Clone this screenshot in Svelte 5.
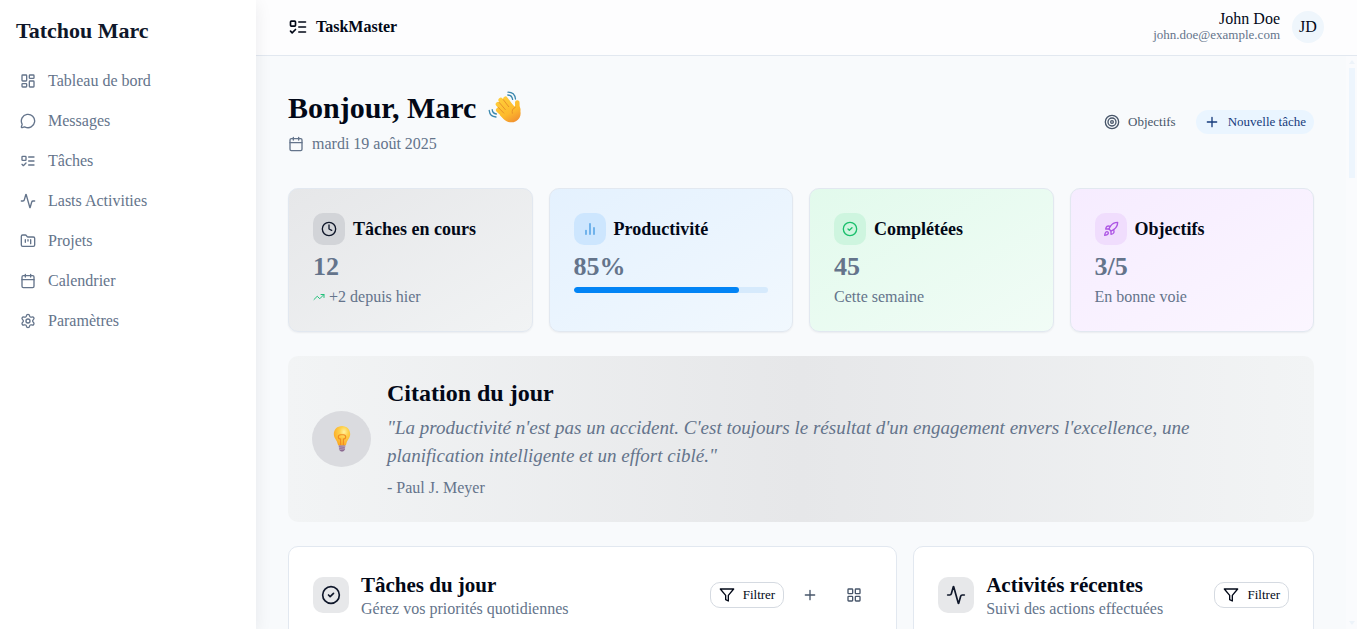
<script>
  const icons = {
    dashboard: '<rect width="7" height="9" x="3" y="3" rx="1"/><rect width="7" height="5" x="14" y="3" rx="1"/><rect width="7" height="9" x="14" y="12" rx="1"/><rect width="7" height="5" x="3" y="16" rx="1"/>',
    message: '<path d="M2.992 16.342a2 2 0 0 1 .094 1.167l-1.065 3.29a1 1 0 0 0 1.236 1.168l3.413-.998a2 2 0 0 1 1.099.092 10 10 0 1 0-4.777-4.719"/>',
    todo: '<rect x="3" y="5" width="6" height="6" rx="1"/><path d="m3 17 2 2 4-4"/><path d="M13 6h8M13 12h8M13 18h8"/>',
    activity: '<path d="M22 12h-2.48a2 2 0 0 0-1.93 1.46l-2.35 8.36a.25.25 0 0 1-.48 0L9.24 2.18a.25.25 0 0 0-.48 0l-2.35 8.36A2 2 0 0 1 4.49 12H2"/>',
    folder: '<path d="M4 20h16a2 2 0 0 0 2-2V8a2 2 0 0 0-2-2h-7.93a2 2 0 0 1-1.66-.9l-.82-1.2A2 2 0 0 0 7.93 3H4a2 2 0 0 0-2 2v13c0 1.1.9 2 2 2Z"/><path d="M8 10v4M12 10v2M16 10v6"/>',
    calendar: '<path d="M8 2v4M16 2v4"/><rect width="18" height="18" x="3" y="4" rx="2"/><path d="M3 10h18"/>',
    settings: '<path d="M9.671 4.136a2.34 2.34 0 0 1 4.659 0 2.34 2.34 0 0 0 3.319 1.915 2.34 2.34 0 0 1 2.33 4.033 2.34 2.34 0 0 0 0 3.831 2.34 2.34 0 0 1-2.33 4.033 2.34 2.34 0 0 0-3.319 1.915 2.34 2.34 0 0 1-4.659 0 2.34 2.34 0 0 0-3.32-1.915 2.34 2.34 0 0 1-2.33-4.033 2.34 2.34 0 0 0 0-3.831A2.34 2.34 0 0 1 6.35 6.051a2.34 2.34 0 0 0 3.319-1.915"/><circle cx="12" cy="12" r="3"/>',
    clock: '<circle cx="12" cy="12" r="10"/><path d="M12 6v6l4 2"/>',
    chart: '<path d="M18 20V10M12 20V4M6 20v-6"/>',
    check: '<circle cx="12" cy="12" r="10"/><path d="m9 12 2 2 4-4"/>',
    rocket: '<path d="M4.5 16.5c-1.5 1.26-2 5-2 5s3.74-.5 5-2c.71-.84.7-2.13-.09-2.91a2.18 2.18 0 0 0-2.91-.09z"/><path d="m12 15-3-3a22 22 0 0 1 2-3.95A12.88 12.88 0 0 1 22 2c0 2.72-.78 7.5-6 11a22.35 22.35 0 0 1-4 2z"/><path d="M9 12H4s.55-3.03 2-4c1.62-1.08 5 0 5 0"/><path d="M12 15v5s3.03-.55 4-2c1.08-1.62 0-5 0-5"/>',
    trend: '<path d="M22 7 13.5 15.5 8.5 10.5 2 17"/><path d="M16 7h6v6"/>',
    target: '<circle cx="12" cy="12" r="10"/><circle cx="12" cy="12" r="6"/><circle cx="12" cy="12" r="2"/>',
    plus: '<path d="M5 12h14M12 5v14"/>',
    filter: '<path d="M22 3H2l8 9.46V19l4 2v-8.54Z"/>',
    grid: '<rect width="7" height="7" x="3" y="3" rx="1"/><rect width="7" height="7" x="14" y="3" rx="1"/><rect width="7" height="7" x="14" y="14" rx="1"/><rect width="7" height="7" x="3" y="14" rx="1"/>'
  };

  const links = [
    ['dashboard', 'Tableau de bord'],
    ['message', 'Messages'],
    ['todo', 'Tâches'],
    ['activity', 'Lasts Activities'],
    ['folder', 'Projets'],
    ['calendar', 'Calendrier'],
    ['settings', 'Paramètres']
  ];

  const stats = [
    { tone: 'gray', icon: 'clock', title: 'Tâches en cours', value: '12', note: '+2 depuis hier', trend: true },
    { tone: 'blue', icon: 'chart', title: 'Productivité', value: '85%', progress: 85 },
    { tone: 'green', icon: 'check', title: 'Complétées', value: '45', note: 'Cette semaine' },
    { tone: 'purple', icon: 'rocket', title: 'Objectifs', value: '3/5', note: 'En bonne voie' }
  ];
</script>

{#snippet icon(name, size = 16)}
  <svg class="icon" width={size} height={size} viewBox="0 0 24 24" aria-hidden="true">{@html icons[name]}</svg>
{/snippet}

<div class="app">
  <aside class="sidebar">
    <h2>Tatchou Marc</h2>
    <nav>
      {#each links as [name, label]}
        <a href="#{name}">{@render icon(name)}<span>{label}</span></a>
      {/each}
    </nav>
  </aside>

  <div class="shell">
    <header class="topbar">
      <div class="brand">{@render icon('todo', 20)}<span>TaskMaster</span></div>
      <div class="account">
        <div class="who">
          <span>John Doe</span>
          <small>john.doe@example.com</small>
        </div>
        <div class="avatar">JD</div>
      </div>
    </header>

    <div class="viewport">
      <main>
        <section class="hero">
          <div>
            <h1>
              <span>Bonjour, Marc</span>
              <svg width="34" height="34" viewBox="0 0 34 34" aria-hidden="true">
                <defs>
                  <linearGradient id="skin" gradientUnits="userSpaceOnUse" x1="10" y1="5" x2="26" y2="32">
                    <stop offset="0" stop-color="#ffd03c" />
                    <stop offset="0.65" stop-color="#fdba2c" />
                    <stop offset="1" stop-color="#f18f30" />
                  </linearGradient>
                </defs>
                <g stroke="url(#skin)" stroke-width="4.600" stroke-linecap="round" fill="none">
                  <path d="m17.500 7.800 6 8M12.700 9l7 9M10 13.300l7 8M10.200 19l6.500 6" />
                  <path d="M29.300 11.500c-.3 3-.2 4.500 1 7" />
                </g>
                <path d="M14 17.500 21.500 11l5 4.500 2.800-2 2.600 4.500c1.800 5.500.2 10-4 12.200-4.300 2.200-8.900 1.200-12.400-2.300l-3.500-3.600Z" fill="url(#skin)" />
                <path d="m15.300 8.700 5.400 7M11.200 11.400l6.100 7.200M10.400 16.500l5.300 5.500M27.300 16.300c-2.700 1.300-3.700 3.300-3 6" fill="none" stroke="#e58b28" stroke-width=".9" stroke-linecap="round" />
                <path d="M20 1.200c4.200 0 7 2.700 7.500 6.800M19.800 4c2.700.1 4.400 1.800 4.800 4.400M1.200 19.400c.4 3.800 2.800 6.400 6.800 6.600M4.200 18.600c.2 2.400 1.700 4 4.200 4.400" fill="none" stroke="#3b88ae" stroke-width="1.300" stroke-linecap="round" />
              </svg>
            </h1>
            <p class="date">{@render icon('calendar')}<span>mardi 19 août 2025</span></p>
          </div>
          <div class="actions">
            <button class="plain">{@render icon('target')}Objectifs</button>
            <button class="primary">{@render icon('plus')}Nouvelle tâche</button>
          </div>
        </section>

        <section class="stats">
          {#each stats as s}
            <article class="stat {s.tone}">
              <div class="stat-head">
                <span class="tile">{@render icon(s.icon)}</span>
                <h3>{s.title}</h3>
              </div>
              <strong>{s.value}</strong>
              {#if s.progress}
                <div class="track"><div class="fill" style="width: {s.progress}%"></div></div>
              {:else}
                <p>{#if s.trend}{@render icon('trend', 12)}{/if}{s.note}</p>
              {/if}
            </article>
          {/each}
        </section>

        <section class="quote">
          <div class="bulb">
            <svg width="28" height="28" viewBox="0 0 28 28" aria-hidden="true">
              <defs>
                <radialGradient id="glow" cx="0.62" cy="0.3" r="0.75">
                  <stop offset="0" stop-color="#fff2a0" />
                  <stop offset="0.35" stop-color="#fed14c" />
                  <stop offset="1" stop-color="#fba51f" />
                </radialGradient>
              </defs>
              <path d="M14 1C9.200 1 5.800 4.600 5.800 9c0 4.400 3.200 5.800 4 10.200.2 1 .7 1.400 1.600 1.400h5.200c.9 0 1.400-.4 1.600-1.400.8-4.400 4-5.800 4-10.200C22.200 4.600 18.800 1 14 1Z" fill="url(#glow)" />
              <path d="M12.600 20v-6c-3-.2-3.200-4 .1-4.300h2.600c3.300.3 3.100 4.100.1 4.300v6" fill="none" stroke="#f18b22" stroke-width="1.100" />
              <path d="M10.800 20.500h6.400v1.700l-.8.900.8.900-.9 1.500-1.300 1h-2l-1.300-1-.9-1.500.8-.9-.8-.9Z" fill="#8b6a91" />
              <path d="m11 22.200 6-.5M11.200 24.400l5.500-.6" stroke="#c6b4c9" stroke-width=".8" />
            </svg>
          </div>
          <div>
            <h2>Citation du jour</h2>
            <blockquote>"La productivité n'est pas un accident. C'est toujours le résultat d'un engagement envers l'excellence, une planification intelligente et un effort ciblé."</blockquote>
            <p>- Paul J. Meyer</p>
          </div>
        </section>

        <section class="panels">
          <article class="panel tasks">
            <span class="tile">{@render icon('check', 20)}</span>
            <div class="panel-title">
              <h2>Tâches du jour</h2>
              <p>Gérez vos priorités quotidiennes</p>
            </div>
            <div class="tools">
              <button class="outline">{@render icon('filter')}Filtrer</button>
              <button class="square" aria-label="Ajouter">{@render icon('plus')}</button>
              <button class="square" aria-label="Grille">{@render icon('grid')}</button>
            </div>
          </article>
          <article class="panel recent">
            <span class="tile">{@render icon('activity', 20)}</span>
            <div class="panel-title">
              <h2>Activités récentes</h2>
              <p>Suivi des actions effectuées</p>
            </div>
            <div class="tools">
              <button class="outline">{@render icon('filter')}Filtrer</button>
            </div>
          </article>
        </section>
      </main>
      <div class="rail" aria-hidden="true"><i></i><b></b><em></em></div>
    </div>
  </div>
</div>

<style>
  :global(body) {
    margin: 0;
    background: #f8fafc;
  }
  .app {
    display: flex;
    height: 100vh;
    overflow: hidden;
    color: #020817;
    font: 16px/24px "Liberation Serif", "Times New Roman", serif;
  }
  .app * {
    box-sizing: border-box;
  }
  h1, h2, h3, p, blockquote {
    margin: 0;
  }
  button {
    font: inherit;
    color: inherit;
    border: 0;
    background: none;
    cursor: pointer;
  }
  .icon {
    flex: none;
    fill: none;
    stroke: currentColor;
    stroke-width: 2;
    stroke-linecap: round;
    stroke-linejoin: round;
  }
  .sidebar {
    flex: none;
    width: 256px;
    padding: 16px;
    background: #fff;
    box-shadow: 0 4px 16px rgba(15, 23, 42, 0.08);
    z-index: 1;
  }
  .sidebar h2 {
    font-size: 22px;
    line-height: 29px;
    color: #0f172a;
  }
  nav {
    display: grid;
    gap: 8px;
    padding-top: 20px;
  }
  nav a {
    display: flex;
    align-items: center;
    gap: 12px;
    height: 32px;
    padding: 0 4px;
    color: #64748b;
    text-decoration: none;
  }
  .shell {
    flex: 1;
    min-width: 0;
    display: flex;
    flex-direction: column;
  }
  .topbar {
    flex: none;
    display: flex;
    align-items: center;
    justify-content: space-between;
    height: 56px;
    padding: 0 33px 1px 32px;
    background: #fdfdfe;
    border-bottom: 1px solid #e2e8f0;
  }
  .brand, .account, .date, .actions, .stat-head, .tools {
    display: flex;
    align-items: center;
  }
  .brand {
    gap: 8px;
    font-weight: 700;
  }
  .account {
    gap: 12px;
  }
  .who {
    display: grid;
    text-align: right;
    line-height: 16px;
  }
  .who small {
    font-size: 13px;
    color: #64748b;
  }
  .avatar {
    width: 32px;
    border-radius: 16px;
    line-height: 32px;
    text-align: center;
    background: #eff6fc;
  }
  .viewport {
    flex: 1;
    min-height: 0;
    display: flex;
  }
  main {
    flex: 1;
    min-width: 0;
    padding: 32px;
    overflow: hidden;
  }
  .rail {
    flex: none;
    width: 11px;
    display: flex;
    flex-direction: column;
    align-items: center;
    background: #fafbfd;
    padding: 4px 0;
  }
  .rail i, .rail em {
    border: 3px solid transparent;
    border-top: 0;
    border-bottom: 4px solid #edf3f9;
  }
  .rail em {
    margin-top: auto;
    transform: rotate(180deg);
  }
  .rail b {
    width: 6px;
    height: 110px;
    margin-top: 4px;
    background: #edf5fd;
  }
  .hero {
    display: flex;
    align-items: center;
    justify-content: space-between;
    margin-bottom: 32px;
  }
  h1 {
    display: flex;
    align-items: center;
    gap: 12px;
    font-size: 30px;
    line-height: 40px;
    margin-bottom: 4px;
  }
  .date {
    gap: 8px;
    color: #64748b;
  }
  .actions {
    gap: 12px;
    font-size: 13px;
  }
  .actions button {
    display: flex;
    align-items: center;
    gap: 8px;
    height: 24px;
    padding: 0 8px;
    border-radius: 12px;
  }
  .actions .plain {
    color: #475569;
  }
  .actions .primary {
    color: #163b7c;
    background: #eaf5ff;
  }
  .stats {
    display: grid;
    grid-template-columns: repeat(4, 1fr);
    gap: 16px;
    margin-bottom: 24px;
  }
  .stat {
    padding: 24px;
    border: 1px solid #e2e8f0;
    border-radius: 10px;
    box-shadow: 0 1px 2px rgba(15, 23, 42, 0.06);
    color: #64748b;
  }
  .stat-head {
    gap: 8px;
    margin-bottom: 6px;
  }
  .stat h3 {
    font-size: 18px;
    color: #020817;
  }
  .tile {
    flex: none;
    display: grid;
    place-items: center;
    width: 32px;
    height: 32px;
    border-radius: 10px;
  }
  .stat strong {
    display: block;
    font-size: 26px;
    line-height: 32px;
    margin-bottom: 4px;
  }
  .stat p {
    display: flex;
    align-items: center;
    gap: 4px;
    line-height: 20px;
  }
  .stat p .icon {
    color: #22c07a;
  }
  .gray { background: linear-gradient(to bottom right, #e6e7e9, #f1f3f4); }
  .gray .tile { background: #d2d4d8; color: #0f172a; }
  .blue { background: linear-gradient(to bottom right, #e4f1fe, #f1f8fe); }
  .blue .tile { background: #cde6fe; color: #4299e1; }
  .green { background: linear-gradient(to bottom right, #e2faec, #f1fcf6); }
  .green .tile { background: #cef5df; color: #19bf6b; }
  .purple { background: linear-gradient(to bottom right, #f6ecff, #fbf6ff); }
  .purple .tile { background: #f0ddfd; color: #ad55e4; }
  .track {
    height: 6px;
    border-radius: 3px;
    background: #d6eafc;
    overflow: hidden;
  }
  .fill {
    height: 6px;
    border-radius: 3px;
    background: #0284f5;
  }
  .quote {
    display: flex;
    align-items: center;
    gap: 16px;
    padding: 24px;
    margin-bottom: 24px;
    border-radius: 10px;
    background: linear-gradient(to right, #f2f4f5, #e6e7e9, #f2f4f5);
    color: #64748b;
  }
  .bulb {
    flex: none;
    display: grid;
    place-items: center;
    width: 59px;
    height: 56px;
    border-radius: 50%;
    background: #dadbdf;
  }
  .quote h2 {
    font-size: 24px;
    line-height: 26px;
    margin-bottom: 8px;
    color: #020817;
  }
  blockquote {
    font-size: 19px;
    line-height: 28px;
    font-style: italic;
    margin-bottom: 8px;
  }
  .quote p {
    line-height: 20px;
  }
  .panels {
    display: grid;
    grid-template-columns: repeat(5, 1fr);
    gap: 16px;
  }
  .panel {
    display: flex;
    align-items: flex-start;
    gap: 12px;
    min-height: 280px;
    padding: 24px;
    border: 1px solid #e2e8f0;
    border-radius: 10px;
    background: #fff;
  }
  .tasks { grid-column: span 3; }
  .recent { grid-column: span 2; }
  .panel .tile {
    width: 36px;
    height: 36px;
    margin-top: 6px;
    background: #e7e8ea;
    color: #0f172a;
  }
  .panel-title {
    flex: 1;
    min-width: 0;
  }
  .panel h2 {
    font-size: 21px;
    line-height: 28px;
  }
  .panel p {
    line-height: 20px;
    color: #64748b;
  }
  .tools {
    gap: 8px;
    height: 48px;
  }
  .outline {
    display: flex;
    align-items: center;
    gap: 8px;
    height: 26px;
    padding: 0 8px;
    font-size: 13px;
    border: 1px solid #d5dae1;
    border-radius: 10px;
  }
  .square {
    display: grid;
    place-items: center;
    width: 36px;
    height: 36px;
    padding: 0;
    color: #475569;
  }
</style>
